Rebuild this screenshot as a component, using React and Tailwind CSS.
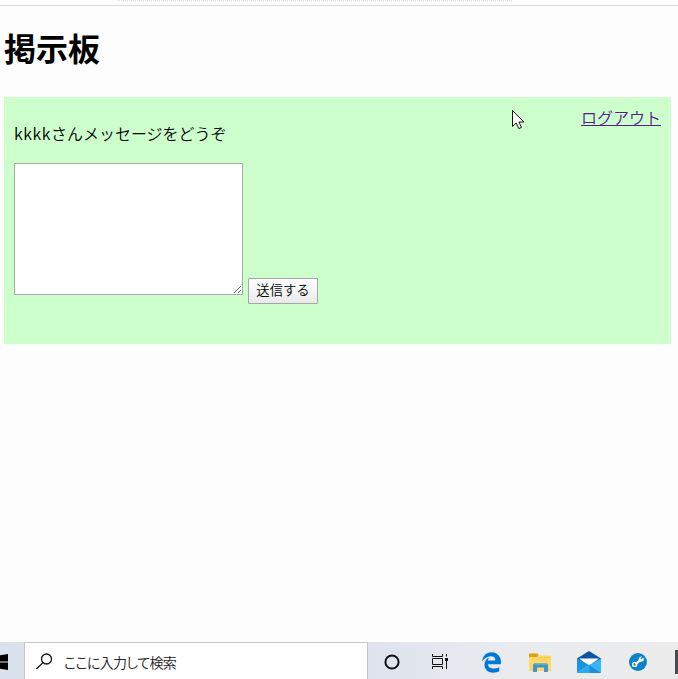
import { FaEdgeLegacy } from "react-icons/fa6";

function Cursor() {
  return (
    <svg className="absolute left-[508px] top-[12px] h-[21px] w-[13px]" viewBox="0 0 13 21">
      <path
        d="M.5 1.5v16l3.7-3.5 2.6 5.6 2.7-1.2-2.6-5.4h5z"
        fill="#fff"
        stroke="#111"
        strokeWidth="1"
      />
    </svg>
  );
}

function Board() {
  return (
    <section className="relative ml-1 mr-[7px] mt-[26px] h-[247px] bg-[#ccffcc] px-[10px] pt-2">
      <div className="flex h-6 justify-end">
        <a href="#logout" className="text-base font-[350] leading-6 text-[#551a8b] underline">
          ログアウト
        </a>
      </div>
      <p className="-mt-2 h-6 text-base font-[350] leading-6">
        <span className="tracking-[0.55px]">kkkk</span>さんメッセージをどうぞ
      </p>
      <form className="mt-[18px] flex items-end gap-[5px]" onSubmit={(e) => e.preventDefault()}>
        <textarea
          aria-label="メッセージ"
          className="mb-[9px] block h-[132px] w-[229px] resize border border-[#a9a9a9] bg-white p-0.5 outline-none"
        />
        <button
          type="submit"
          className="h-[26px] w-[70px] rounded-[1px] border border-[#a6a6a6] bg-linear-to-b from-white to-[#e9e9e9] pb-0.5 text-[13.33px] font-[350] leading-[20px]"
        >
          送信する
        </button>
      </form>
      <Cursor />
    </section>
  );
}

function StartIcon() {
  return (
    <svg className="h-4 w-2" viewBox="0 0 8 16">
      <path d="M0 1.2 8 0v7.5H0zM0 8.5h8V16l-8-1.2z" fill="#000" />
    </svg>
  );
}

function SearchIcon() {
  return (
    <svg className="h-[18px] w-[18px]" viewBox="0 0 18 18" fill="none" stroke="#111" strokeWidth="1.3">
      <circle cx="10.5" cy="6" r="5" />
      <path d="M6.9 9.6.4 16.1" />
    </svg>
  );
}

function CortanaIcon() {
  return (
    <svg className="h-4 w-4" viewBox="0 0 16 16" fill="none" stroke="#111" strokeWidth="2">
      <circle cx="8" cy="8" r="6.6" />
    </svg>
  );
}

function TaskViewIcon() {
  return (
    <svg className="h-4 w-[17px]" viewBox="0 0 17 16" fill="none" stroke="#111" strokeWidth="1">
      <path d="M.5 0v2.5h10V0M.5 15v-2.5h10V15M.5 4.500v6h10v-6z" />
      <path d="M14.5 0v2.500M14.5 7v8" />
      <path d="M13 4h3v3h-3z" fill="#111" stroke="none" />
    </svg>
  );
}

function FolderIcon() {
  return (
    <svg className="h-[19px] w-[22px]" viewBox="0 0 22 19">
      <path d="M0 1.5Q0 .5 1 .5h7.5l1.5 2H21q1 0 1 1V18H0z" fill="#ffd767" />
      <path d="M0 1.5Q0 .5 1 .5h7.5l1 1.5-1.5 2H0z" fill="#d9a21b" />
      <path d="M9 4h13v1H8z" fill="#f5c84b" />
      <path d="M4 12q0-1.5 1.5-1.5h12Q19 10.5 19 12v7h-4v-4.5H8V19H4z" fill="#3f97c9" />
      <path d="M5 10.5h13V12H5z" fill="#56acd8" />
    </svg>
  );
}

function MailIcon() {
  return (
    <svg className="h-[22px] w-6" viewBox="0 0 24 22">
      <path d="M0 7.5 12 0l12 7.500V15H0z" fill="#0c55a0" />
      <path d="M2 7.500h20L12 15z" fill="#fff" />
      <path d="M0 7.500 12 14 0 22z" fill="#1a93e2" />
      <path d="M24 7.500V22L12 14z" fill="#35b8f2" />
      <path d="M0 22 12 14l12 8z" fill="#2aaaea" />
      <path d="m12 14 12 8H13z" fill="#1c8cdc" />
    </svg>
  );
}

function WrenchIcon() {
  return (
    <svg className="h-[18px] w-[18px]" viewBox="0 0 18 18">
      <circle cx="9" cy="9" r="9" fill="#0a84c9" />
      <path d="M6.3 11.2 11.7 7" stroke="#fff" strokeWidth="2.2" />
      <path
        d="M14.2 4.6 12.2 6.2l-.9-1.2 1.8-1.3a2.9 2.9 0 0 0-3.3 4 2.9 2.9 0 0 0 5-.7 2.900 2.900 0 0 0-.6-2.400z"
        fill="#fff"
      />
      <circle cx="5.7" cy="11.4" r="2" fill="none" stroke="#fff" strokeWidth="1.4" />
    </svg>
  );
}

function Taskbar() {
  return (
    <footer className="flex h-[37px] overflow-hidden bg-linear-to-r from-[#dce1ee] from-50% via-[#e9ebee] via-75% to-[#ececec]">
      <div className="flex w-6 flex-none items-center pt-[3px]">
        <StartIcon />
      </div>
      <div className="flex w-[344px] flex-none items-center border border-b-0 border-[#c8c8c8] bg-white pl-[11px] pt-px">
        <SearchIcon />
        <span className="ml-[10px] text-[14px] font-[350] leading-5 tracking-[-0.65px] text-[#222] [font-feature-settings:'palt']">
          ここに入力して検索
        </span>
      </div>
      <div className="flex flex-1 items-center pt-[3px]">
        <div className="flex w-12 flex-none justify-center">
          <CortanaIcon />
        </div>
        <div className="flex w-12 flex-none justify-center">
          <TaskViewIcon />
        </div>
        <div className="flex w-[54px] flex-none justify-center">
          <FaEdgeLegacy className="h-[21px] w-[21px] text-[#0078d7]" />
        </div>
        <div className="flex w-[44px] flex-none justify-center">
          <FolderIcon />
        </div>
        <div className="flex w-[54px] flex-none justify-center">
          <MailIcon />
        </div>
        <div className="flex w-[44px] flex-none justify-center">
          <WrenchIcon />
        </div>
        <div className="ml-auto h-6 w-[3px] flex-none bg-[#484b4b]" />
      </div>
    </footer>
  );
}

export default function App() {
  return (
    <div className="flex h-[679px] w-[678px] flex-col overflow-hidden bg-[#fdfdfd] font-['Noto_Sans_CJK_JP',sans-serif] text-black">
      <div className="h-[6px] flex-none border-b border-[#dadada]">
        <div className="ml-[117px] w-[395px] border-t border-dotted border-[#dedede]" />
      </div>
      <main className="flex-1">
        <h1 className="ml-1 mt-[17px] h-12 text-[32px] font-bold leading-[48px]">掲示板</h1>
        <Board />
      </main>
      <Taskbar />
    </div>
  );
}
